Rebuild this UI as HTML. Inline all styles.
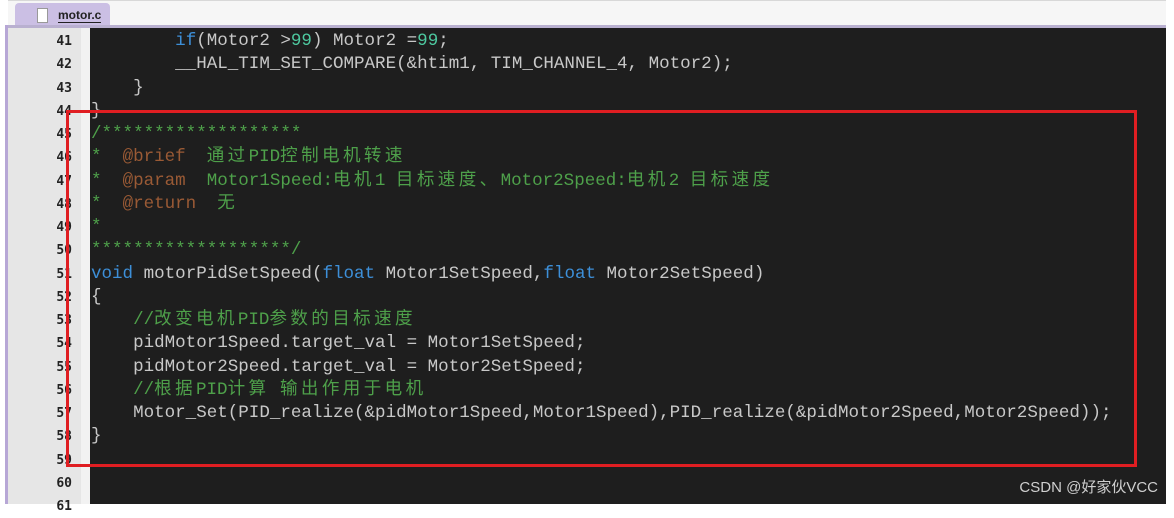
<!DOCTYPE html>
<html><head><meta charset="utf-8"><style>
body{margin:0;width:1174px;height:504px;overflow:hidden;background:#fff;position:relative;font-family:"Liberation Mono","Noto Sans CJK SC",monospace;}
.top{position:absolute;left:8px;top:0;width:1158px;height:25px;background:#f6f6f6;border-top:1px solid #d8d8d8;}
.tab{position:absolute;left:15px;top:3px;width:95px;height:23px;background:#cbbfe4;border-radius:4px 4px 0 0;}
.tab span{position:absolute;left:43px;top:5px;font:bold 12px "Liberation Sans",sans-serif;color:#222;border-bottom:1px solid #222;line-height:14px}
.doc{position:absolute;left:22px;top:5px;width:9px;height:13px;background:#fff;border:1px solid #999;}
.bar{position:absolute;left:8px;top:25px;width:1158px;height:3px;background:#b9b0d0;}
.edge{position:absolute;left:5px;top:25px;width:3px;height:479px;background:#b7a7d6;}
.gut{position:absolute;left:8px;top:28px;width:73px;height:476px;background:#e6e6e6;}
.fold{position:absolute;left:81px;top:28px;width:9px;height:476px;background:#f2f2f2;border-right:1px solid #ccc;}
.code{position:absolute;left:90px;top:28px;width:1076px;height:476px;background:#1e1e1e;}
.ln{position:absolute;left:8px;top:30px;width:64px;text-align:right;font:bold 13px "DejaVu Sans Mono",monospace;color:#222;line-height:23.25px;}
.src{position:absolute;left:91px;top:30px;font-size:17.55px;line-height:23.25px;color:#c8c8c8;white-space:pre;}
.k{color:#3d8fd8}.n{color:#4ec9a0}.c{color:#4ea04a}.t{color:#9a5a35}
.z{letter-spacing:3.4px}
.box{position:absolute;left:66px;top:110px;width:1065px;height:351px;border:3px solid #e01e22;}
.wm{position:absolute;right:16px;top:476px;font:15px "Liberation Sans","Noto Sans CJK SC",sans-serif;color:#cfcfcf;}
</style></head><body>
<div class="top"></div><div class="tab"><div class="doc"></div><span>motor.c</span></div>
<div class="bar"></div><div class="edge"></div>
<div class="gut"></div><div class="fold"></div><div class="code"></div>
<div class="ln">41<br>42<br>43<br>44<br>45<br>46<br>47<br>48<br>49<br>50<br>51<br>52<br>53<br>54<br>55<br>56<br>57<br>58<br>59<br>60<br>61</div>
<div class="src">        <span class="k">if</span>(Motor2 &gt;<span class="n">99</span>) Motor2 =<span class="n">99</span>;
        __HAL_TIM_SET_COMPARE(&amp;htim1, TIM_CHANNEL_4, Motor2);
    }
}
<span class="c">/*******************</span>
<span class="c">*  <span class="t">@brief</span>  <span class="z">通过</span>PID<span class="z">控制电机转速</span></span>
<span class="c">*  <span class="t">@param</span>  Motor1Speed:<span class="z">电机</span>1 <span class="z">目标速度、</span>Motor2Speed:<span class="z">电机</span>2 <span class="z">目标速度</span></span>
<span class="c">*  <span class="t">@return</span>  <span class="z">无</span></span>
<span class="c">*</span>
<span class="c">*******************/</span>
<span class="k">void</span> motorPidSetSpeed(<span class="k">float</span> Motor1SetSpeed,<span class="k">float</span> Motor2SetSpeed)
{
    <span class="c">//<span class="z">改变电机</span>PID<span class="z">参数的目标速度</span></span>
    pidMotor1Speed.target_val = Motor1SetSpeed;
    pidMotor2Speed.target_val = Motor2SetSpeed;
    <span class="c">//<span class="z">根据</span>PID<span class="z">计算</span> <span class="z">输出作用于电机</span></span>
    Motor_Set(PID_realize(&amp;pidMotor1Speed,Motor1Speed),PID_realize(&amp;pidMotor2Speed,Motor2Speed));
}
</div>
<div class="box"></div>
<div class="wm">CSDN @好家伙VCC</div>
</body></html>
